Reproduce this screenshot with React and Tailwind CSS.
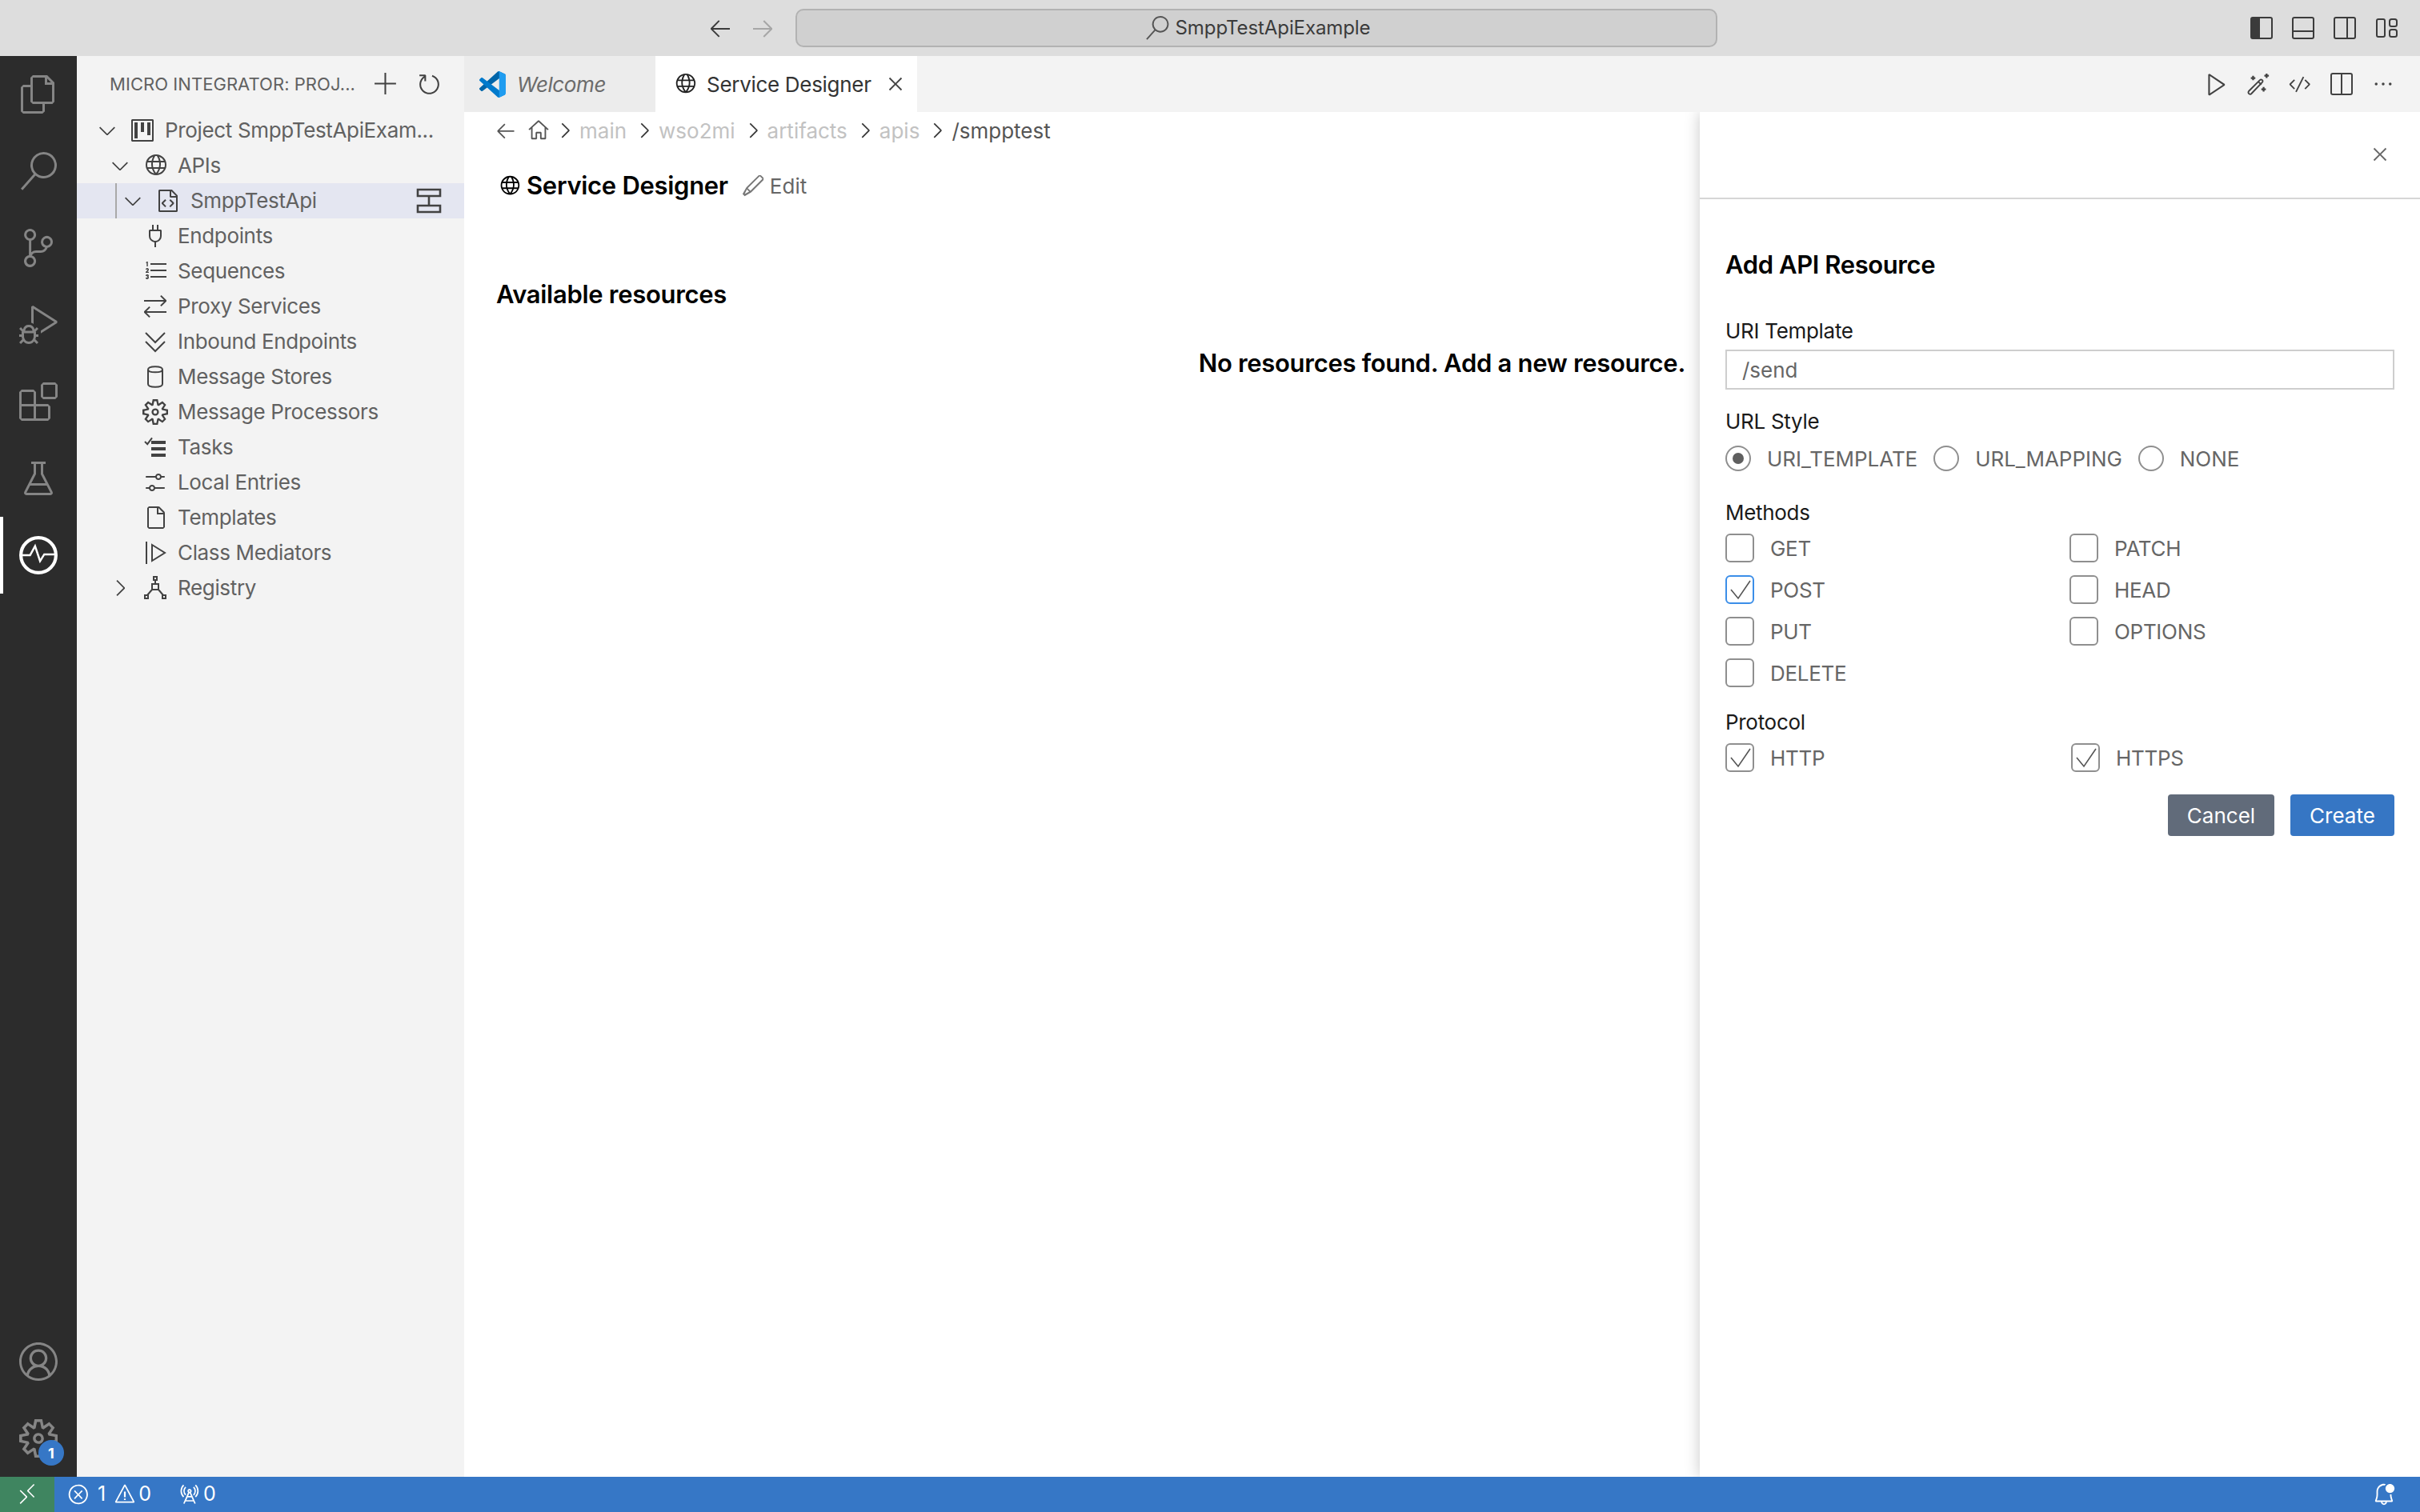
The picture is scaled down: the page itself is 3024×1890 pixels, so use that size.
import React from "react";
import {
  VscFiles, VscSearch, VscSourceControl, VscDebugAlt, VscExtensions, VscBeaker, VscAccount, VscSettingsGear,
  VscChevronDown, VscChevronRight, VscGlobe, VscAdd, VscRefresh, VscClose, VscArrowLeft, VscArrowRight,
  VscRemote, VscError, VscWarning, VscRadioTower, VscBellDot, VscHome, VscEdit, VscPlay, VscEllipsis, VscCode,
  VscProject, VscFileCode, VscListOrdered, VscFile, VscSettings, VscPlug, VscArrowSwap,
} from "react-icons/vsc";

const S = ({ children, className = "", vb = "0 0 16 16" }) => (
  <svg viewBox={vb} fill="none" stroke="currentColor" strokeWidth="1" className={className}>{children}</svg>
);

const VsLogo = () => (
  <svg viewBox="0 0 100 100" className="w-[33px] h-[33px]">
    <path fill="#0065a9" d="M96.46 10.8L75.86.87C73.47-.28 70.62.21 68.75 2.08L1.3 63.6c-1.8 1.6-1.8 4.5 0 6.2l5.5 5c1.5 1.3 3.7 1.4 5.3.2L93.4 13.5c2.7-2.1 6.6-.2 6.6 3.3v-.2c0-2.4-1.4-4.6-3.54-5.8z" />
    <path fill="#007acc" d="M96.46 89.2L75.86 99.1c-2.39 1.15-5.24.66-7.11-1.2L1.3 36.4c-1.8-1.6-1.8-4.5 0-6.2l5.5-5c1.5-1.3 3.7-1.4 5.3-.2l81.3 61.5c2.7 2.1 6.6.2 6.6-3.3v.2c0 2.4-1.4 4.6-3.54 5.8z" />
    <path fill="#1f9cf0" d="M75.86 99.13c-2.39 1.15-5.24.66-7.11-1.2 2.31 2.31 6.25.67 6.25-2.59V4.66c0-3.26-3.94-4.9-6.25-2.59 1.87-1.87 4.72-2.35 7.11-1.2l20.6 9.9c2.14 1.03 3.5 3.2 3.5 5.58v67.3c0 2.38-1.36 4.55-3.5 5.58z" />
  </svg>
);

const Inbound = () => (
  <S className="w-[32px] h-[32px]"><path d="M2 2.5l6 6 6-6M2 8l6 6 6-6" /></S>
);
const Cyl = () => (
  <S className="w-[32px] h-[32px]"><path d="M3.5 3.5c0-2.5 9-2.5 9 0v9c0 2.5-9 2.5-9 0zM3.5 3.5c0 2.2 9 2.2 9 0" /></S>
);
const Tasks = () => (
  <S className="w-[32px] h-[32px]" >
    <path d="M1.5 4.5l1.6 1.6L6 2.2" />
    <path d="M5.5 5h9M5.5 9h9M5.5 13h9" strokeWidth="2" />
  </S>
);
const ClassMed = () => (
  <S className="w-[32px] h-[32px]"><path d="M2.5 1v14M6 3l8 5-8 5z" /></S>
);
const Registry = () => (
  <S className="w-[32px] h-[32px]"><path d="M7 1h2v2H7zM8 3v2.5M6 5.5h4v3.5H6zM6 9l-3 3.5M10 9l3 3.5M1.5 12.5h2v2h-2zM12.5 12.5h2v2h-2z" /></S>
);
const Stacked = () => (
  <S className="w-[34px] h-[34px]" vb="0 0 17 17"><path d="M1.5 1.5h14v4h-14zM1.5 11.5h14v4h-14zM8.5 5.5v6" strokeWidth="1.3" /></S>
);
const Pulse = () => (
  <S className="w-[50px] h-[50px]" vb="0 0 24 24">
    <circle cx="12" cy="12" r="10.5" strokeWidth="2" />
    <path d="M2 12h5l3-5.5 3 9 2.5-4H22" strokeWidth="1.2" />
  </S>
);
const Wand = () => (
  <S className="w-[30px] h-[30px]">
    <path d="M2 14.6c-.8-.6-.9-1.2-.4-1.8L9 5.4c.8-.7 1.7-.2 1.9.4.1.4 0 .8-.3 1.1L3.4 14.4c-.5.5-1 .6-1.4.2zM8 6.5l2 2" />
    <path d="M13.5 1v3M12 2.5h3M4.5 2.5v3M3 4h3M11.5 10v3M10 11.5h3" strokeWidth="1.2" />
  </S>
);
const LayoutL = () => (
  <svg viewBox="0 0 28 28" className="w-[28px] h-[28px]">
    <rect x="1" y="1" width="26" height="26" rx="2" fill="none" stroke="#3b3b3b" strokeWidth="2" />
    <path d="M2 2h10v24H2z" fill="#3b3b3b" />
  </svg>
);
const LayoutP = () => (
  <svg viewBox="0 0 28 28" className="w-[28px] h-[28px]" fill="none" stroke="#3b3b3b" strokeWidth="2">
    <rect x="1" y="1" width="26" height="26" rx="2" /><path d="M1 18h26" />
  </svg>
);
const LayoutR = () => (
  <svg viewBox="0 0 28 28" className="w-[28px] h-[28px]" fill="none" stroke="#3b3b3b" strokeWidth="2">
    <rect x="1" y="1" width="26" height="26" rx="2" /><path d="M17 1v26" />
  </svg>
);
const LayoutC = () => (
  <svg viewBox="0 0 28 28" className="w-[28px] h-[28px]" fill="none" stroke="#3b3b3b" strokeWidth="2">
    <rect x="2" y="3" width="10" height="22" rx="2" /><rect x="18" y="3" width="9" height="9" rx="2.5" /><rect x="18" y="16" width="9" height="9" rx="2.5" />
  </svg>
);
const Split = () => (
  <svg viewBox="0 0 28 28" className="w-[28px] h-[28px]" fill="none" stroke="#424242" strokeWidth="2">
    <rect x="1" y="1" width="26" height="26" rx="2" /><path d="M14 1v26" />
  </svg>
);
const Check = () => (
  <svg viewBox="0 0 32 32" className="w-full h-full" fill="none" stroke="#555" strokeWidth="1.6"><path d="M5 16l9 11L29 5" /></svg>
);

const Act = ({ children, className = "" }) => (
  <div className={`w-[96px] flex items-center justify-center text-[48px] text-[#858585] ${className}`}>{children}</div>
);

const Row = ({ pl, chevron, icon, label, right, selected, guide }) => (
  <div className={`relative flex items-center h-[44px] ${pl} ${selected ? "bg-[#e4e6f1]" : ""}`}>
    {guide && <div className="absolute left-[48px] top-0 bottom-0 w-[2px] bg-[#a9a9a9]" />}
    {chevron && <div className="w-[42px] flex items-center text-[32px] text-[#424242] shrink-0">{chevron === "down" ? <VscChevronDown /> : <VscChevronRight />}</div>}
    <div className="w-[36px] flex items-center justify-center text-[32px] text-[#424242] shrink-0">{icon}</div>
    <span className="ml-[10px] text-[26px] leading-[44px] text-[#616161] whitespace-nowrap tracking-[-0.35px]">{label}</span>
    {right && <div className="ml-auto mr-[27px] text-[#424242] flex items-center">{right}</div>}
  </div>
);

const Crumb = ({ children, className = "" }) => (
  <span className={`text-[26px] ${className}`}>{children}</span>
);
const Sep = () => <VscChevronRight className="text-[30px] text-[#333] ml-[7px] mr-[3px]" />;

const Radio = ({ on, label }) => (
  <div className="flex items-center">
    <div className="w-[32px] h-[32px] rounded-full border-2 border-[#8f8f8f] flex items-center justify-center">
      {on && <div className="w-[14px] h-[14px] rounded-full bg-[#5f5f5f]" />}
    </div>
    <span className="ml-[20px] text-[26px] text-[#666] tracking-[-0.05px]">{label}</span>
  </div>
);

const Box = ({ on, blue, label, className = "" }) => (
  <div className={`flex items-center h-[52px] ${className}`}>
    <div className={`w-[36px] h-[36px] rounded-[6px] border-2 ${blue ? "border-[#3b8ee8]" : "border-[#8f8f8f]"}`}>
      {on && <Check />}
    </div>
    <span className="ml-[20px] text-[26px] text-[#666] tracking-[-0.3px]">{label}</span>
  </div>
);

const Action = ({ children }) => <div className="w-[52px] flex items-center justify-center">{children}</div>;

export default function App() {
  return (
    <div className="w-[3024px] h-[1890px] flex flex-col overflow-hidden bg-white font-['Inter','Noto_Sans',sans-serif]">
      <div className="h-[70px] shrink-0 bg-[#dddddd] flex items-center pl-[884px] pr-[28px]">
        <VscArrowLeft className="text-[32px] text-[#3b3b3b]" />
        <VscArrowRight className="text-[32px] text-[#a6a6a6] ml-[21px]" />
        <div className="ml-[25px] w-[1152px] h-[48px] rounded-[10px] border-2 border-[#b2b2b2] bg-[#d0d0d0] flex items-center justify-center pl-[3px]">
          <VscSearch className="text-[30px] text-[#555]" />
          <span className="ml-[8px] text-[24px] text-[#3b3b3b] tracking-[-0.1px]">SmppTestApiExample</span>
        </div>
        <div className="ml-auto flex items-center gap-[24px]">
          <LayoutL /><LayoutP /><LayoutR /><LayoutC />
        </div>
      </div>

      <div className="flex-1 flex min-h-0">
        <div className="w-[96px] shrink-0 bg-[#2c2c2c] flex flex-col">
          <Act className="h-[96px] mt-[0px]"><VscFiles /></Act>
          <Act className="h-[96px]"><VscSearch /></Act>
          <Act className="h-[96px]"><VscSourceControl /></Act>
          <Act className="h-[96px]"><VscDebugAlt /></Act>
          <Act className="h-[96px]"><VscExtensions /></Act>
          <Act className="h-[96px]"><VscBeaker /></Act>
          <Act className="h-[96px] relative text-white">
            <div className="absolute left-0 top-0 bottom-0 w-[4px] bg-white" />
            <Pulse />
          </Act>
          <div className="flex-1" />
          <Act className="h-[96px]"><VscAccount /></Act>
          <Act className="h-[96px] relative">
            <VscSettingsGear />
            <div className="absolute left-[48px] top-[50px] w-[32px] h-[32px] rounded-full bg-[#3677c6] text-white text-[18px] font-bold flex items-center justify-center">1</div>
          </Act>
        </div>

        <div className="w-[484px] shrink-0 bg-[#f3f3f3] flex flex-col">
          <div className="h-[70px] shrink-0 flex items-center pl-[41px]">
            <span className="text-[22px] text-[#616161] tracking-[0.05px] whitespace-nowrap">MICRO INTEGRATOR: PROJ...</span>
            <VscAdd className="ml-[22px] text-[33px] text-[#424242]" />
            <VscRefresh className="ml-[21px] text-[33px] text-[#424242]" />
          </div>
          <div className="pt-[1px]">
            <Row pl="pl-[22px]" chevron="down" icon={<VscProject />} label="Project SmppTestApiExam..." />
            <Row pl="pl-[38px]" chevron="down" icon={<VscGlobe />} label="APIs" />
            <Row pl="pl-[54px]" chevron="down" icon={<VscFileCode />} label="SmppTestApi" selected guide right={<Stacked />} />
            <Row pl="pl-[80px]" icon={<VscPlug />} label="Endpoints" />
            <Row pl="pl-[80px]" icon={<VscListOrdered />} label="Sequences" />
            <Row pl="pl-[80px]" icon={<VscArrowSwap />} label="Proxy Services" />
            <Row pl="pl-[80px]" icon={<Inbound />} label="Inbound Endpoints" />
            <Row pl="pl-[80px]" icon={<Cyl />} label="Message Stores" />
            <Row pl="pl-[80px]" icon={<VscSettingsGear />} label="Message Processors" />
            <Row pl="pl-[80px]" icon={<Tasks />} label="Tasks" />
            <Row pl="pl-[80px]" icon={<VscSettings />} label="Local Entries" />
            <Row pl="pl-[80px]" icon={<VscFile />} label="Templates" />
            <Row pl="pl-[80px]" icon={<ClassMed />} label="Class Mediators" />
            <Row pl="pl-[38px]" chevron="right" icon={<Registry />} label="Registry" />
          </div>
        </div>

        <div className="flex-1 min-w-0 flex flex-col">
          <div className="relative z-20 h-[70px] shrink-0 bg-[#f3f3f3] flex items-stretch">
            <div className="w-[239px] bg-[#ececec] flex items-center pl-[19px]">
              <VsLogo />
              <span className="ml-[14px] text-[26px] italic text-[#6b6b6b] tracking-[-0.4px]">Welcome</span>
            </div>
            <div className="w-[327px] bg-white flex items-center pl-[22px]">
              <VscGlobe className="text-[30px] text-[#222]" />
              <span className="ml-[12px] text-[26px] text-[#333] tracking-[-0.3px] whitespace-nowrap">Service Designer</span>
              <VscClose className="ml-[15px] text-[30px] text-[#424242]" />
            </div>
            <div className="ml-auto flex items-center pr-[20px] text-[#424242]">
              <Action><VscPlay className="text-[34px]" /></Action>
              <Action><Wand /></Action>
              <Action><VscCode className="text-[30px]" /></Action>
              <Action><Split /></Action>
              <Action><VscEllipsis className="text-[28px]" /></Action>
            </div>
          </div>

          <div className="flex-1 min-h-0 flex">
            <div className="w-[1544px] shrink-0 pl-[38px]">
              <div className="h-[46px] flex items-center">
                <VscArrowLeft className="text-[28px] text-[#555]" />
                <VscHome className="ml-[12px] mr-[-4px] text-[30px] text-[#555]" />
                <Sep /><Crumb className="text-[#c2c2c2]">main</Crumb>
                <Sep /><Crumb className="text-[#c2c2c2]">wso2mi</Crumb>
                <Sep /><Crumb className="text-[#c2c2c2]">artifacts</Crumb>
                <Sep /><Crumb className="text-[#c2c2c2]">apis</Crumb>
                <Sep /><Crumb className="text-[#555]">/smpptest</Crumb>
              </div>
              <div className="mt-[23px] h-[46px] flex items-center pl-[4px]">
                <VscGlobe className="text-[29px] text-black" />
                <span className="ml-[7px] text-[31px] font-semibold text-black tracking-[-0.3px]">Service Designer</span>
                <VscEdit className="ml-[16px] text-[30px] text-[#777]" />
                <span className="ml-[6px] text-[26px] text-[#666]">Edit</span>
              </div>
              <div className="mt-[90px] pl-[2px] h-[46px] flex items-center text-[31px] font-semibold text-black tracking-[-0.3px]">Available resources</div>
              <div className="mt-[40px] h-[46px] flex items-center justify-end pr-[18px] text-[31px] font-semibold text-black tracking-[-0.3px]">No resources found. Add a new resource.</div>
            </div>

            <div className="relative z-10 flex-1 min-w-0 bg-white shadow-[0_0_18px_rgba(0,0,0,0.22)] flex flex-col">
              <div className="h-[109px] shrink-0 border-b-[2px] border-[#d6d6d6] flex items-center justify-end pr-[35px] pb-[1px]">
                <VscClose className="text-[30px] text-[#666]" />
              </div>
              <div className="pl-[32px] pr-[32px] flex flex-col">
                <div className="mt-[59px] text-[31px] leading-[46px] font-semibold text-black tracking-[-0.4px]">Add API Resource</div>
                <div className="mt-[40px] text-[26px] leading-[40px] text-[#1a1a1a] tracking-[-0.3px]">URI Template</div>
                <div className="mt-[3px] h-[50px] border-2 border-[#cecece] flex items-center pl-[19px] text-[26px] text-[#666]">/send</div>
                <div className="mt-[20px] text-[26px] leading-[40px] text-[#1a1a1a] tracking-[-0.3px]">URL Style</div>
                <div className="mt-[6px] h-[40px] flex items-center gap-[20px]">
                  <Radio on label="URI_TEMPLATE" />
                  <Radio label="URL_MAPPING" />
                  <Radio label="NONE" />
                </div>
                <div className="mt-[28px] text-[26px] leading-[40px] text-[#1a1a1a] tracking-[-0.3px]">Methods</div>
                <div className="grid grid-cols-[430px_1fr] mt-[-2px]">
                  <Box label="GET" />
                  <Box label="PATCH" />
                  <Box on blue label="POST" />
                  <Box label="HEAD" />
                  <Box label="PUT" />
                  <Box label="OPTIONS" />
                  <Box label="DELETE" />
                </div>
                <div className="mt-[16px] text-[26px] leading-[40px] text-[#1a1a1a] tracking-[-0.3px]">Protocol</div>
                <div className="grid grid-cols-[432px_1fr] mt-[-2px]">
                  <Box on label="HTTP" />
                  <Box on label="HTTPS" />
                </div>
                <div className="mt-[20px] flex justify-end gap-[20px]">
                  <div className="w-[133px] h-[52px] rounded-[4px] bg-[#616b7a] text-white text-[26px] flex items-center justify-center">Cancel</div>
                  <div className="w-[130px] h-[52px] rounded-[4px] bg-[#3676c4] text-white text-[26px] flex items-center justify-center">Create</div>
                </div>
              </div>
            </div>
          </div>
        </div>
      </div>

      <div className="relative z-20 h-[44px] shrink-0 bg-[#3677c6] flex items-center text-white text-[25px]">
        <div className="w-[68px] h-full bg-[#3f8560] flex items-center justify-center"><VscRemote className="text-[30px]" /></div>
        <VscError className="ml-[16px] text-[28px]" />
        <span className="ml-[10px]">1</span>
        <VscWarning className="ml-[10px] text-[28px]" />
        <span className="ml-[3px]">0</span>
        <VscRadioTower className="ml-[33px] text-[28px]" />
        <span className="ml-[4px]">0</span>
        <VscBellDot className="ml-auto mr-[30px] text-[30px]" />
      </div>
    </div>
  );
}
